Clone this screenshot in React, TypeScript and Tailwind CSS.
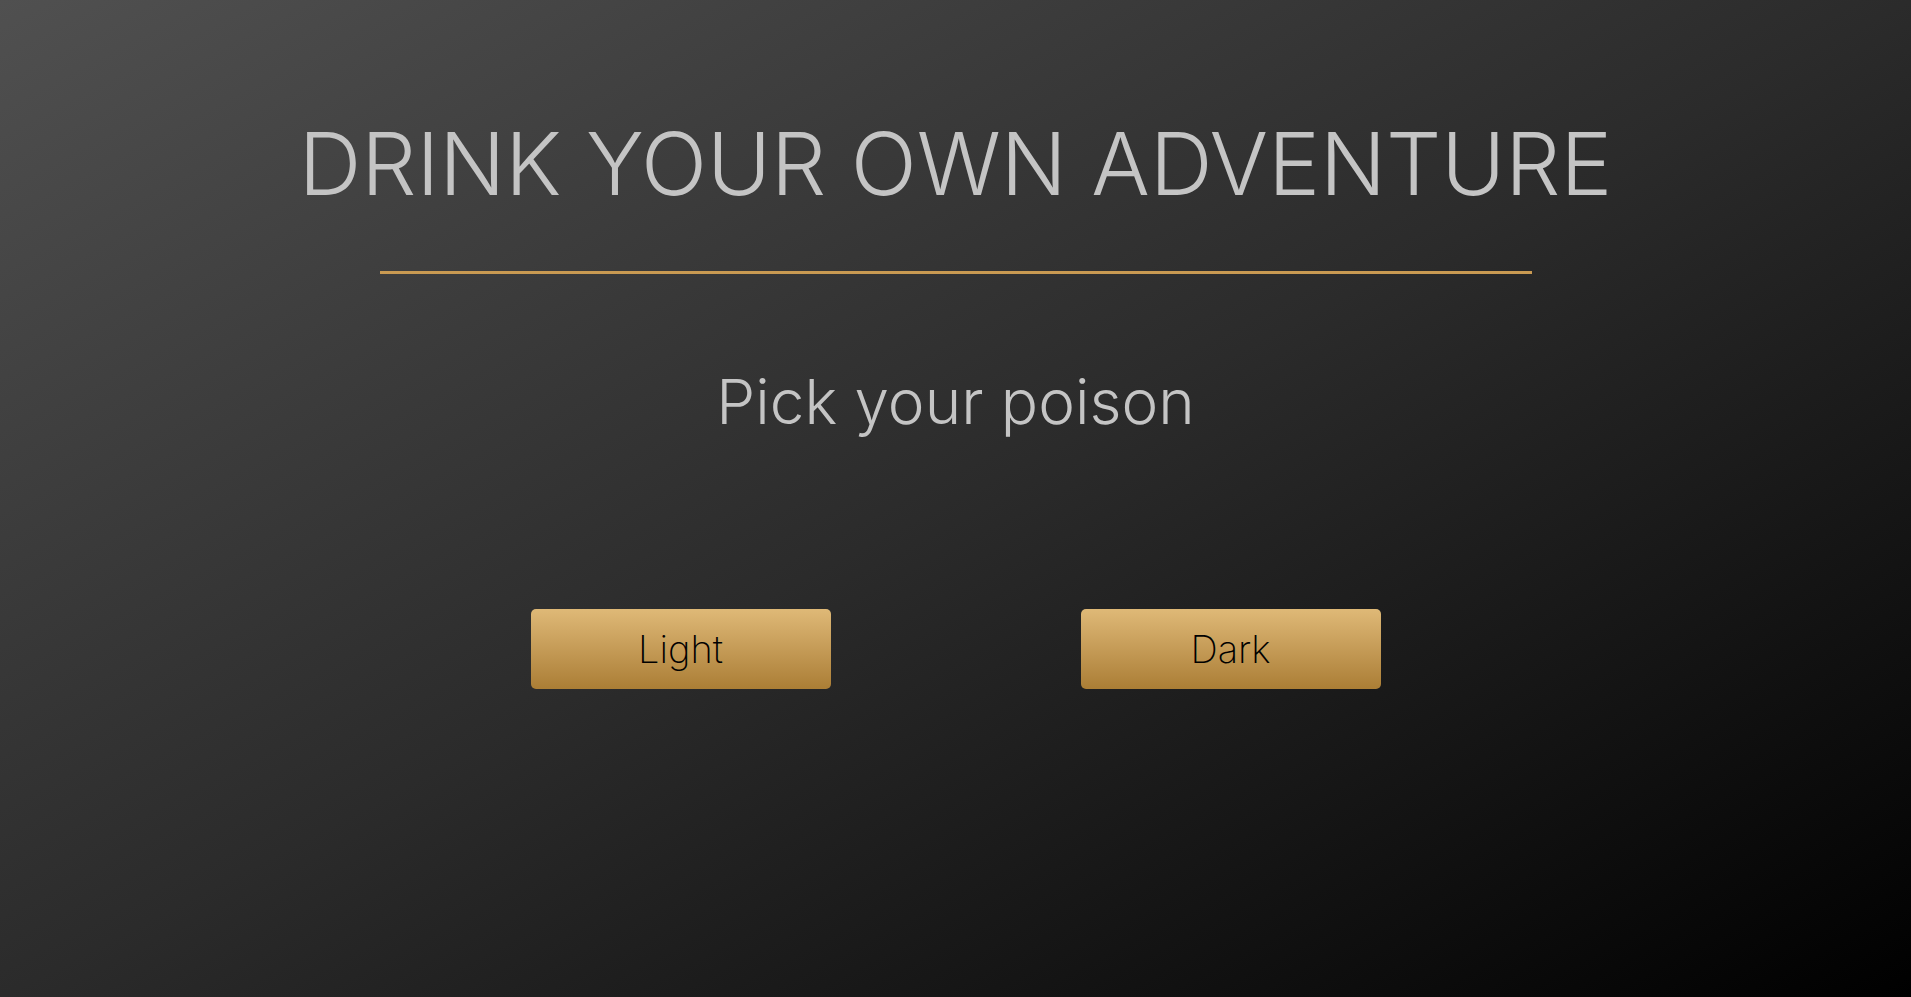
export default function App() {
  return (
    <div
      className="min-h-screen w-full bg-linear-to-br/srgb from-[#505050] via-[#2b2b2b] to-black flex flex-col items-center"
      style={{ fontFamily: "Inter, 'Noto Sans', sans-serif" }}
    >
      <h1 className="mt-[120px] text-[87px] leading-none font-light text-[#c4c4c4] whitespace-nowrap">
        DRINK YOUR OWN ADVENTURE
      </h1>
      <div className="mt-[64px] h-[3px] w-[1152px] bg-[#c99a52]" />
      <h2 className="mt-[97px] text-[62px] leading-none font-light text-[#c4c4c4]">
        Pick your poison
      </h2>
      <div className="mt-[176px] flex gap-[250px]">
        {["Light", "Dark"].map((label) => (
          <button
            key={label}
            className="w-[300px] h-[80px] rounded-[5px] bg-linear-to-b from-[#dfb977] to-[#ab7e35] text-black text-[38px] font-extralight leading-none"
          >
            {label}
          </button>
        ))}
      </div>
    </div>
  );
}
